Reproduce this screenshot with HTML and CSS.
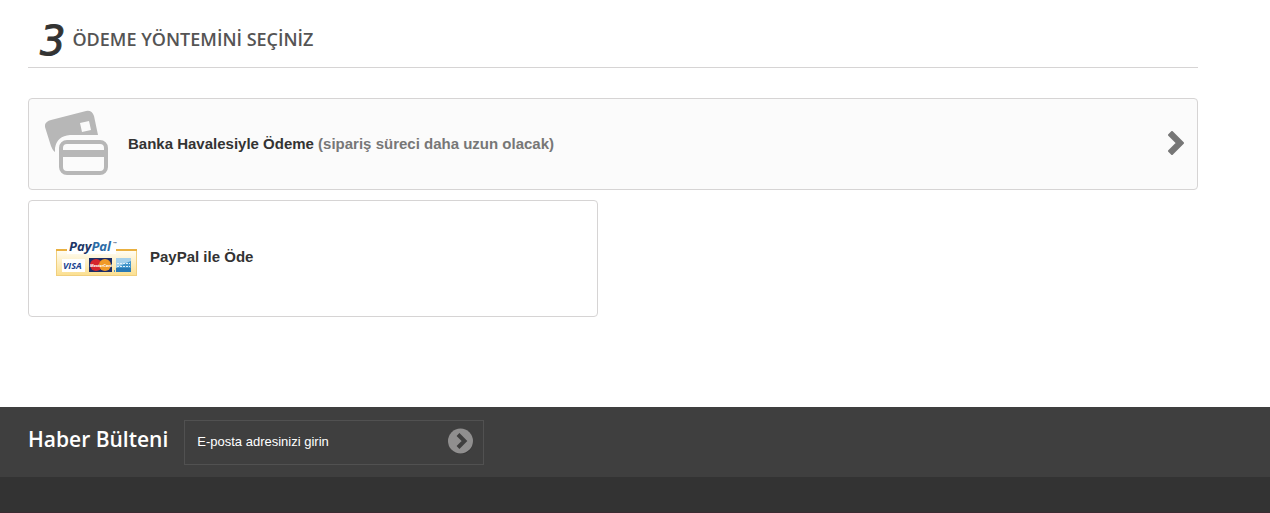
FILE: index.html
```html
<!DOCTYPE html>
<html lang="tr">

<head>
  <meta charset="UTF-8">
  <meta name="viewport" content="width=device-width, initial-scale=1.0">
  <title>Ödeme</title>
  <link rel="stylesheet" href="styles.css">
</head>

<body>
  <main class="container checkout">
    <h1 class="step-title"><span class="step-number">3</span>Ödeme yöntemini seçiniz</h1>

    <!-- payment methods -->
    <a href="#" class="payment bankwire">
      <svg class="cards-icon" width="64" height="66" viewBox="0 -1 64 66" aria-hidden="true">
        <path fill="#b7b7b7" fill-rule="evenodd" d="M6 9 L41 0 Q47 -1 49 5 L53 24 H25 Q12 25 10 37 V41 Q7 39 5 32 L0 16 Q-1 11 6 9 Z M35 12 L44 10 L46 19 L37 21 Z"/>
        <rect x="16" y="31" width="45" height="31" rx="6" fill="none" stroke="#b7b7b7" stroke-width="4"/>
        <rect x="16" y="39" width="45" height="7" fill="#b7b7b7"/>
      </svg>
      <span class="payment-label">Banka Havalesiyle Ödeme <span class="note">(sipariş süreci daha uzun olacak)</span></span>
      <svg class="chevron" width="16" height="24" viewBox="0 0 16 24" aria-hidden="true">
        <path fill="#777" stroke="#777" stroke-width="2" stroke-linejoin="round" d="M4 1 L15 12 L4 23 L1 20 L9 12 L1 4 Z"/>
      </svg>
    </a>

    <a href="#" class="payment paypal">
      <svg class="paypal-icon" width="81" height="48" viewBox="0 -7 81 48" aria-hidden="true">
        <defs>
          <linearGradient id="gold" x1="0" y1="0" x2="0" y2="1">
            <stop offset="0" stop-color="#fffdf5"/>
            <stop offset="1" stop-color="#fbdf8f"/>
          </linearGradient>
        </defs>
        <rect x="0.5" y="8.5" width="80" height="25" fill="url(#gold)" stroke="#f1cf7d"/>
        <path fill="#e9b040" d="M0 7h81v2H0z"/>
        <path fill="#fff" d="M11 0h49v12H11z"/>
        <text class="logo-paypal" x="13" y="9"><tspan fill="#1c3666">Pay</tspan><tspan fill="#2a6ca6">Pal</tspan></text>
        <text class="logo-tm" x="57" y="3" fill="#1c3666">™</text>
        <rect x="6" y="17" width="23" height="13" fill="#fff"/>
        <text class="logo-visa" x="7" y="27" fill="#1b4490">VISA</text>
        <rect x="33" y="16" width="23" height="14" fill="#1d2d66"/>
        <circle cx="40" cy="23" r="6" fill="#d5242c"/>
        <circle cx="49" cy="23" r="6" fill="#f09a28"/>
        <text class="logo-card" x="34" y="25" fill="#fff">MasterCard</text>
        <rect x="60" y="16" width="15" height="14" fill="#4396cb"/>
        <path fill="#a4d0eb" d="M60 16h15v3l-5 2-10 5z"/>
        <path fill="#2979b4" d="M60 26h15v4H60z"/>
        <path stroke="#e2f1fa" d="M61 21.5h13M61 24.5h13" stroke-dasharray="2 1"/>
        <path fill="#4c96c8" d="M58 28h1v2h-1z"/>
      </svg>
      <span class="payment-label">PayPal ile Öde</span>
    </a>
  </main>

  <footer class="footer">
    <div class="newsletter-bar">
      <form class="container newsletter">
        <label class="newsletter-title" for="newsletter-email">Haber Bülteni</label>
        <div class="newsletter-field">
          <input type="email" id="newsletter-email" placeholder="E-posta adresinizi girin">
          <button type="submit" aria-label="Gönder">
            <svg width="25" height="26" viewBox="0 0 25 26" aria-hidden="true">
              <circle cx="13" cy="14" r="12" fill="#333"/>
              <circle cx="12.5" cy="13" r="12.5" fill="#908f8f"/>
              <path fill="none" stroke="#3f3f3f" stroke-width="4" d="M10 6.5 L16.5 13 L10 19.5"/>
            </svg>
          </button>
        </div>
      </form>
    </div>
  </footer>
</body>

</html>
```

FILE: styles.css
```css
* {
  box-sizing: border-box;
}

body {
  display: flex;
  flex-direction: column;
  min-height: 100vh;
  margin: 0;
  background: #fff;
  color: #333;
  font-family: "Liberation Sans", Arial, sans-serif;
}

.container {
  max-width: 1226px;
  padding: 0 28px;
}

/* checkout step */
.checkout {
  padding-bottom: 90px;
}

.step-title {
  display: flex;
  align-items: center;
  min-height: 68px;
  margin: 0 0 30px;
  padding: 10px 0 0 12px;
  border-bottom: 1px solid #d6d4d4;
  color: #555454;
  font: 600 18px/22px "Open Sans", sans-serif;
  text-transform: uppercase;
}

.step-number {
  margin-right: 7px;
  padding-top: 4px;
  color: #333;
  font-family: "DejaVu Sans", sans-serif;
  font-size: 40px;
  font-style: italic;
  font-weight: normal;
  -webkit-text-stroke: 1px #333;
}

/* payment methods */
.payment {
  display: flex;
  align-items: center;
  border: 1px solid #d6d4d4;
  border-radius: 4px;
  color: #333;
  font-size: 15px;
  font-weight: bold;
  line-height: 23px;
  text-decoration: none;
}

.bankwire {
  min-height: 92px;
  margin-bottom: 10px;
  padding: 0 13px 2px 16px;
  background: #fbfbfb;
}

.bankwire .payment-label {
  margin-left: 19px;
}

.note {
  color: #777;
}

.chevron {
  margin-left: auto;
}

.paypal {
  width: 570px;
  max-width: 100%;
  min-height: 117px;
  padding: 0 27px;
}

.paypal .payment-label {
  margin: 0 0 4px 13px;
}

.logo-paypal,
.logo-visa,
.logo-card {
  font-family: "Open Sans", sans-serif;
  font-style: italic;
  font-weight: bold;
}

.logo-paypal {
  font-size: 13px;
}

.logo-tm {
  font-size: 4px;
}

.logo-visa {
  font-size: 9px;
}

.logo-card {
  font-size: 4px;
}

/* footer */
.footer {
  flex: 1;
  border-bottom: 1px solid #3a2b31;
  background: #333;
}

.newsletter-bar {
  background: #3f3f3f;
}

.newsletter {
  display: flex;
  align-items: center;
  gap: 16px;
  min-height: 70px;
}

.newsletter-title {
  padding-bottom: 6px;
  color: #fff;
  font: 600 21px/25px "Open Sans", sans-serif;
}

.newsletter-field {
  display: flex;
  align-items: center;
  width: 300px;
  height: 45px;
  padding: 0 10px 0 12px;
  border: 1px solid #515151;
}

.newsletter-field input {
  flex: 1;
  min-width: 0;
  padding: 0;
  border: 0;
  outline: none;
  background: transparent;
  color: #fff;
  font: 13px/18px "Liberation Sans", Arial, sans-serif;
}

.newsletter-field input::placeholder {
  color: #fff;
}

.newsletter-field button {
  display: flex;
  padding: 0 0 3px;
  border: 0;
  background: none;
  cursor: pointer;
}
```
